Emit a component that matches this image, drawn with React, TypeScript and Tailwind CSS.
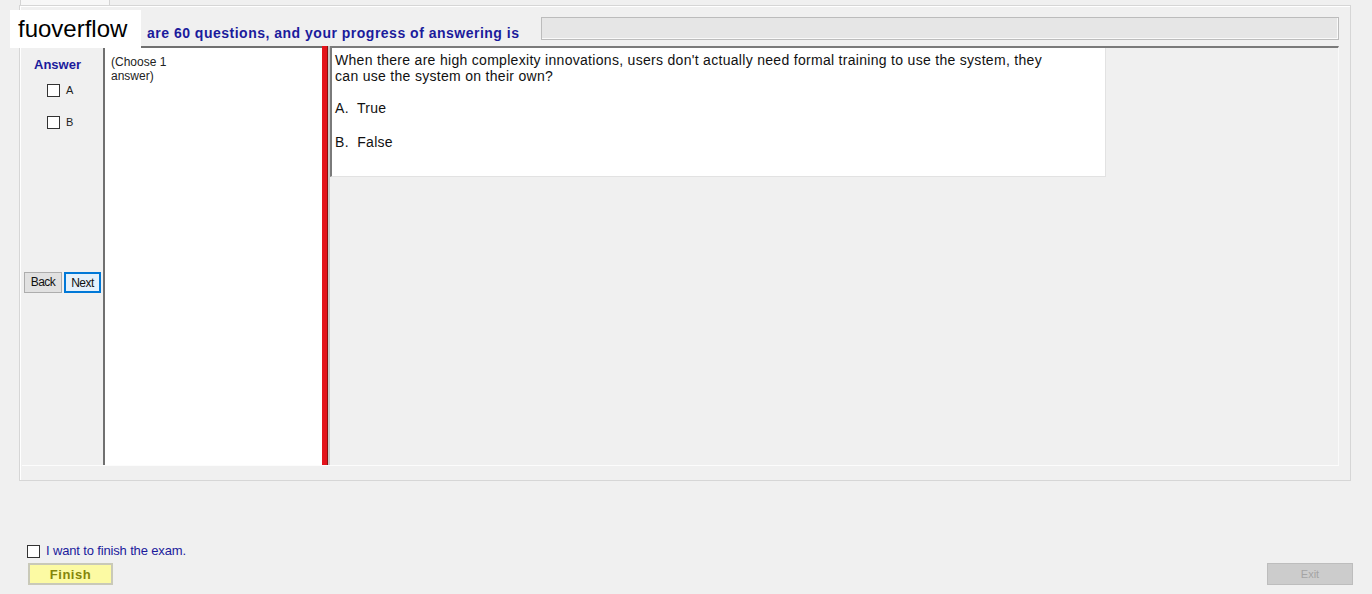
import React from "react";

const blue = "text-[#1b1b9c]";

function Box({ label }: { label: string }) {
  return (
    <div className="flex items-center gap-[6px] h-[14px]">
      <span className="w-[13px] h-[13px] border border-[#333] bg-white" />
      <span className="text-[11px] text-[#222]">{label}</span>
    </div>
  );
}

export default function App() {
  return (
    <div
      className="relative w-[1372px] h-[594px] bg-[#f0f0f0] flex flex-col overflow-hidden"
      style={{ fontFamily: '"Liberation Sans", Arial, sans-serif' }}
    >
      {/* tab strip */}
      <div className="h-[5px] flex">
        <div className="ml-[20px] w-[90px] h-[7px] border-x border-[#d4d4d4] bg-[#f7f7f7]" />
      </div>

      {/* main group */}
      <div className="ml-[19px] mr-[21px] h-[476px] border border-[#d6d6d6] shadow-[inset_1px_1px_0_#fff] flex flex-col">
        <div className="h-[40px] flex items-start">
          <div className={`w-[521px] pl-[127px] pt-[17px] text-[14px] tracking-[0.5px] font-bold ${blue} whitespace-nowrap`}>
            are 60 questions, and your progress of answering is
          </div>
          <div className="mt-[11px] w-[798px] h-[23px] bg-[#e6e6e6] border border-[#bcbcbc] shadow-[inset_-1px_-1px_0_#fafafa]" />
        </div>

        <div className="ml-[2px] mr-[11px] h-[420px] flex border-b border-[#fcfcfc]">
          {/* answer column */}
          <div className="w-[81px] flex flex-col">
            <div className={`pl-[12px] pt-[9px] text-[13px] font-bold ${blue}`}>Answer</div>
            <div className="pl-[25px] mt-[9px] flex flex-col gap-[18px]">
              <Box label="A" />
              <Box label="B" />
            </div>
            <div className="mt-[142px] ml-[2px] flex gap-[2px]">
              <button className="w-[38px] h-[21px] bg-[#e1e1e1] border border-[#adadad] text-[12px] text-[#111] tracking-[-0.5px]">
                Back
              </button>
              <button className="w-[37px] h-[21px] bg-[#e5f1fb] border-2 border-[#0078d7] text-[12px] text-[#111] tracking-[-0.5px]">
                Next
              </button>
            </div>
          </div>

          {/* instructions */}
          <div className="w-[219px] bg-white border-t-2 border-l-2 border-[#707070] pl-[6px] pt-[7px] text-[12px] leading-[14px] text-[#222]">
            (Choose 1
            <br />
            answer)
          </div>

          {/* red divider */}
          <div className="w-[8px] flex">
            <div className="w-[5px] bg-[#e3131b]" />
            <div className="w-[1px] bg-[#8a1010]" />
            <div className="w-[2px] bg-[#c8c8c8]" />
          </div>

          {/* question area */}
          <div className="flex-1 border-t-2 border-[#7a7a7a] border-r border-r-[#fafafa] flex flex-col">
            <div className="flex h-[129px]">
              <div className="w-[776px] bg-white border-l-2 border-[#7a7a7a] border-r border-r-[#e2e2e2] border-b border-b-[#e2e2e2] pl-[3px] pt-[4px] text-[14px] leading-[16px] tracking-[0.3px] text-[#111]">
                <p>
                  When there are high complexity innovations, users don't actually need formal training to use the system, they
                  <br />
                  can use the system on their own?
                </p>
                <p className="mt-[16px]">A.&nbsp; True</p>
                <p className="mt-[18px]">B.&nbsp; False</p>
              </div>
              <div className="flex-1" />
            </div>
          </div>
        </div>
      </div>

      {/* finish area */}
      <div className="mt-[63px] ml-[27px] flex items-center gap-[6px] h-[14px]">
        <span className="w-[13px] h-[13px] border border-[#333] bg-white" />
        <span className={`text-[13px] tracking-[-0.15px] ${blue}`}>I want to finish the exam.</span>
      </div>
      <div className="mt-[5px] flex justify-between pl-[28px] pr-[19px]">
        <button className="w-[85px] h-[22px] bg-[#fcfaa3] border-2 border-[#c9c9b8] text-[13px] font-bold tracking-[0.5px] text-[#85850a]">
          Finish
        </button>
        <button className="w-[86px] h-[22px] bg-[#cccccc] border border-[#bdbdbd] text-[11px] text-[#a4a4a4]">
          Exit
        </button>
      </div>

      {/* watermark */}
      <div className="absolute left-[10px] top-[10px] w-[131px] h-[38px] bg-white flex items-center pl-[8px] text-[24px] text-black">
        fuoverflow
      </div>
    </div>
  );
}
